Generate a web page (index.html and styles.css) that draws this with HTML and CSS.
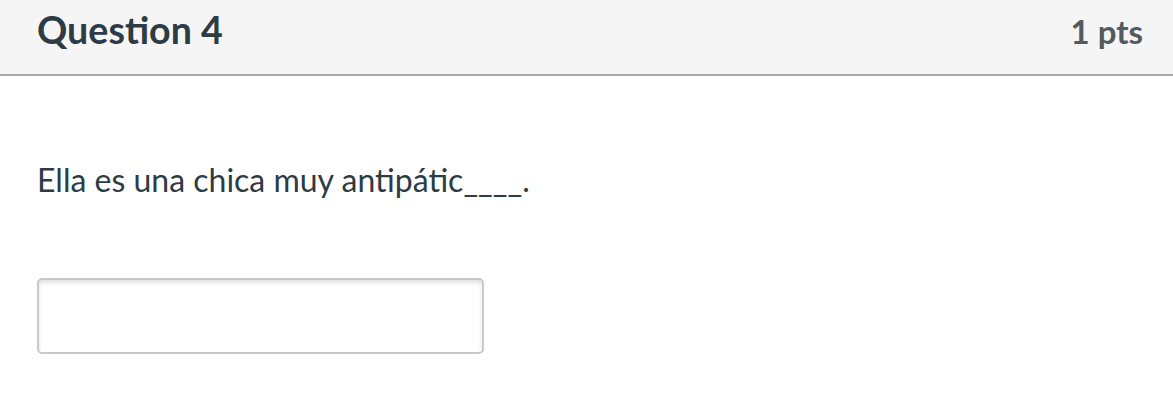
FILE: index.html
```html
<!DOCTYPE html>
<html lang="es">
<head>
<meta charset="utf-8">
<title>Question 4</title>
<link rel="stylesheet" href="styles.css">
</head>
<body>
<div class="question">
  <div class="header">
    <span class="title">Question 4</span>
    <span class="points">1 pts</span>
  </div>
  <div class="content">
    <p class="text">Ella es una chica muy antipátic____.</p>
    <input class="answer" type="text" aria-label="Respuesta">
  </div>
</div>
</body>
</html>
```
FILE: styles.css
```css
html, body {
  margin: 0;
  padding: 0;
  background: #ffffff;
}
body {
  font-family: "Lato", "Liberation Sans", sans-serif;
  color: #2d3b45;
}
.header {
  display: flex;
  justify-content: space-between;
  align-items: center;
  padding: 0 30px 0 37px;
  background: #f5f5f5;
  border-bottom: 2px solid #a8a8a8;
  box-sizing: border-box;
  height: 76px;
}
.title {
  font-size: 37.6px;
  font-weight: 700;
  color: #2d3b45;
  margin-top: -15px;
}
.points {
  font-size: 33px;
  font-weight: 700;
  color: #555a5e;
  margin-top: -13px;
}
.content {
  padding: 0 37px;
}
.text {
  margin: 84px 0 0;
  font-size: 32px;
  line-height: 40px;
}
.answer {
  display: block;
  margin-top: 78px;
  width: 447px;
  height: 76px;
  box-sizing: border-box;
  border: 2px solid #c9c9c9;
  border-radius: 5px;
  background: #fff;
  box-shadow: inset 0 3px 4px rgba(0, 0, 0, 0.12);
  outline: none;
}
```
